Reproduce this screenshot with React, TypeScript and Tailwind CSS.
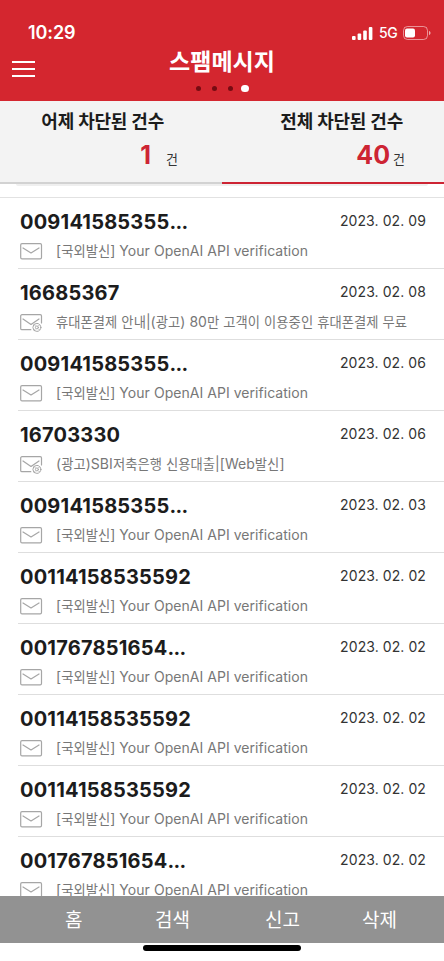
import React, { useState } from 'react';
import clsx from 'clsx';

type Message = {
  sender: string;
  date: string;
  body: string;
  ad?: boolean;
};

const VERIFICATION = '[국외발신] Your OpenAI API verification';

const messages: Message[] = [
  { sender: '009141585355...', date: '2023. 02. 09', body: VERIFICATION },
  { sender: '16685367', date: '2023. 02. 08', body: '휴대폰결제 안내|(광고) 80만 고객이 이용중인 휴대폰결제 무료', ad: true },
  { sender: '009141585355...', date: '2023. 02. 06', body: VERIFICATION },
  { sender: '16703330', date: '2023. 02. 06', body: '(광고)SBI저축은행 신용대출|[Web발신]', ad: true },
  { sender: '009141585355...', date: '2023. 02. 03', body: VERIFICATION },
  { sender: '00114158535592', date: '2023. 02. 02', body: VERIFICATION },
  { sender: '001767851654...', date: '2023. 02. 02', body: VERIFICATION },
  { sender: '00114158535592', date: '2023. 02. 02', body: VERIFICATION },
  { sender: '00114158535592', date: '2023. 02. 02', body: VERIFICATION },
  { sender: '001767851654...', date: '2023. 02. 02', body: VERIFICATION },
];

function StatusBar() {
  return (
    <div className="flex h-[44px] justify-between pl-[28px] pr-[13px] pt-[21px]">
      <span className="text-[18px] font-semibold leading-[24px] tracking-[-0.1px]">10:29</span>
      <div className="flex h-[24px] items-center">
        <svg width="21" height="13" viewBox="0 0 21 13" fill="currentColor">
          <rect x="0" y="9" width="3.6" height="4" rx="1" />
          <rect x="5.6" y="6.5" width="3.6" height="6.5" rx="1" />
          <rect x="11.2" y="3.5" width="3.6" height="9.5" rx="1" />
          <rect x="16.8" y="0" width="3.6" height="13" rx="1" />
        </svg>
        <span className="ml-[6px] w-[19px] text-[14px] font-medium leading-[24px] tracking-[-0.3px]">5G</span>
        <svg className="ml-[5px]" width="28" height="14" viewBox="0 0 28 14">
          <rect x="0.5" y="0.5" width="24" height="13" rx="4" fill="none" stroke="#fff" strokeOpacity="0.5" />
          <rect x="2" y="2.5" width="10" height="9" rx="2" fill="#fff" />
          <path d="M26 5v4c1-.4 1.5-1.1 1.5-2S27 5.400 26 5z" fill="#fff" fillOpacity="0.6" />
        </svg>
      </div>
    </div>
  );
}

function Header() {
  return (
    <header className="h-[101px] bg-[#d4262f] text-white">
      <StatusBar />
      <div className="grid h-[57px] grid-cols-[1fr_auto_1fr]">
        <button className="ml-[12px] mt-[17px] flex h-[16px] w-[23px] flex-col justify-between" aria-label="메뉴">
          <span className="h-[2px] w-full bg-white" />
          <span className="h-[2px] w-full bg-white" />
          <span className="h-[2px] w-full bg-white" />
        </button>
        <div className="flex flex-col items-center">
          <h1 className="mt-[1px] h-[34px] text-[23px] font-bold leading-[34px]">스팸메시지</h1>
          <div className="mt-[5px] flex h-[8px] items-center gap-[11px]">
            <span className="size-[5px] rounded-full bg-[#760b12]" />
            <span className="size-[5px] rounded-full bg-[#760b12]" />
            <span className="size-[5px] rounded-full bg-[#760b12]" />
            <span className="-ml-[3px] h-[7px] w-[8px] rounded-full bg-white" />
          </div>
        </div>
      </div>
    </header>
  );
}

type TabProps = {
  label: string;
  count: number;
  active: boolean;
  onClick: () => void;
};

function Tab({ label, count, active, onClick }: TabProps) {
  return (
    <button
      onClick={onClick}
      className={clsx('flex h-[83px] w-1/2 flex-col items-end border-b-2', active ? 'border-[#cd2433] pr-[39px]' : 'border-[#d2d2d2] pr-[44px]')}
    >
      <span className={clsx('mt-[8px] h-[26px] text-[18px] font-bold leading-[26px] tracking-[-0.2px]', active ? 'mr-[2px]' : 'mr-[14px]')}>
        {label}
      </span>
      <span className="flex h-[40px] items-baseline leading-[40px]">
        <span className="text-[25px] font-bold text-[#cd2433]">{count}</span>
        <span className={clsx('text-[13px] text-[#333]', active ? 'ml-[3px]' : 'ml-[15px]')}>건</span>
      </span>
    </button>
  );
}

function MailIcon({ ad }: { ad?: boolean }) {
  return (
    <svg className="mb-[1px] shrink-0" width="23" height="18" viewBox="0 0 23 18" fill="none" stroke="#a6a6a6" strokeWidth="1.200" strokeLinejoin="round" strokeLinecap="round">
      {ad ? (
        <>
          <path d="M10.800 15.700H2a1.300 1.300 0 0 1-1.300-1.300V2A1.300 1.300 0 0 1 2 .7h18.200A1.300 1.300 0 0 1 21.500 2v7" />
          <path d="M3 5l8 5.500L19 5" />
          <circle cx="16.900" cy="13.400" r="4" strokeWidth="1" />
          <circle cx="16.900" cy="13.400" r="1.500" strokeWidth="0.900" />
          <path d="M15.400 11.900l-1-1M18.400 11.900l1-1M15.400 14.900l-1 1M18.400 14.900l1 1" strokeWidth="0.700" />
        </>
      ) : (
        <>
          <rect x="0.700" y="0.700" width="20.800" height="15.200" rx="1.300" />
          <path d="M3 5l8 5L19 5" />
        </>
      )}
    </svg>
  );
}

// Hangul runs a little smaller than the latin text next to it
function MixedText({ text }: { text: string }) {
  return (
    <>
      {text.split(/([가-힣]+)/).map((part, i) => (i % 2 ? <span key={i} className="text-[13.3px]">{part}</span> : part))}
    </>
  );
}

function MessageRow({ message }: { message: Message }) {
  const [digits] = message.sender.split('...');
  const cut = message.sender.endsWith('...');

  return (
    <li className="ml-[18px] h-[71px] shrink-0 border-b border-[#dedede] pl-[2px] pr-[18px]">
      <div className="flex h-[45px] items-center justify-between">
        <span className="mt-[2px] text-[20px] font-bold tracking-[0.2px] text-[#1c1c1c]">
          {digits}
          {cut && <span className="tracking-[-0.6px]">...</span>}
        </span>
        <span className="mb-px text-[14px] tracking-[0.08px] text-[#333]">{message.date}</span>
      </div>
      <div className="flex h-[19px] items-center">
        <MailIcon ad={message.ad} />
        <span className="mb-[3px] ml-[13px] whitespace-nowrap text-[14px] leading-[18px] tracking-[0.04px] text-[#777]">
          <MixedText text={message.body} />
        </span>
      </div>
    </li>
  );
}

function App() {
  const [tab, setTab] = useState<'yesterday' | 'total'>('total');

  return (
    <div className="flex h-[961px] w-[444px] flex-col overflow-hidden bg-white font-['Inter','Noto_Sans_CJK_KR',sans-serif]">
      <Header />
      <div className="flex h-[83px] shrink-0 bg-[#f3f3f3] text-[#1c1c1c]">
        <Tab label="어제 차단된 건수" count={1} active={tab === 'yesterday'} onClick={() => setTab('yesterday')} />
        <Tab label="전체 차단된 건수" count={40} active={tab === 'total'} onClick={() => setTab('total')} />
      </div>
      <div className="h-[14px] shrink-0 border-b border-[#e2e2e2] px-[16px]">
        <div className="h-[2px] rounded-b-full bg-[#efefef]" />
      </div>
      <ul className="flex h-[698px] shrink-0 flex-col overflow-hidden">
        {messages.map((m, i) => (
          <MessageRow key={i} message={m} />
        ))}
      </ul>
      <nav className="flex h-[47px] shrink-0 items-center bg-[#929292] pl-[65px] pt-[4px] text-[19px] text-white">
        <button className="w-[90px] text-left">홈</button>
        <button className="w-[110px] text-left">검색</button>
        <button className="w-[97px] text-left">신고</button>
        <button>삭제</button>
      </nav>
      <div className="flex h-[18px] shrink-0 justify-center pt-[2px]">
        <div className="h-[6px] w-[158px] rounded-full bg-black" />
      </div>
    </div>
  );
}

export default App;
